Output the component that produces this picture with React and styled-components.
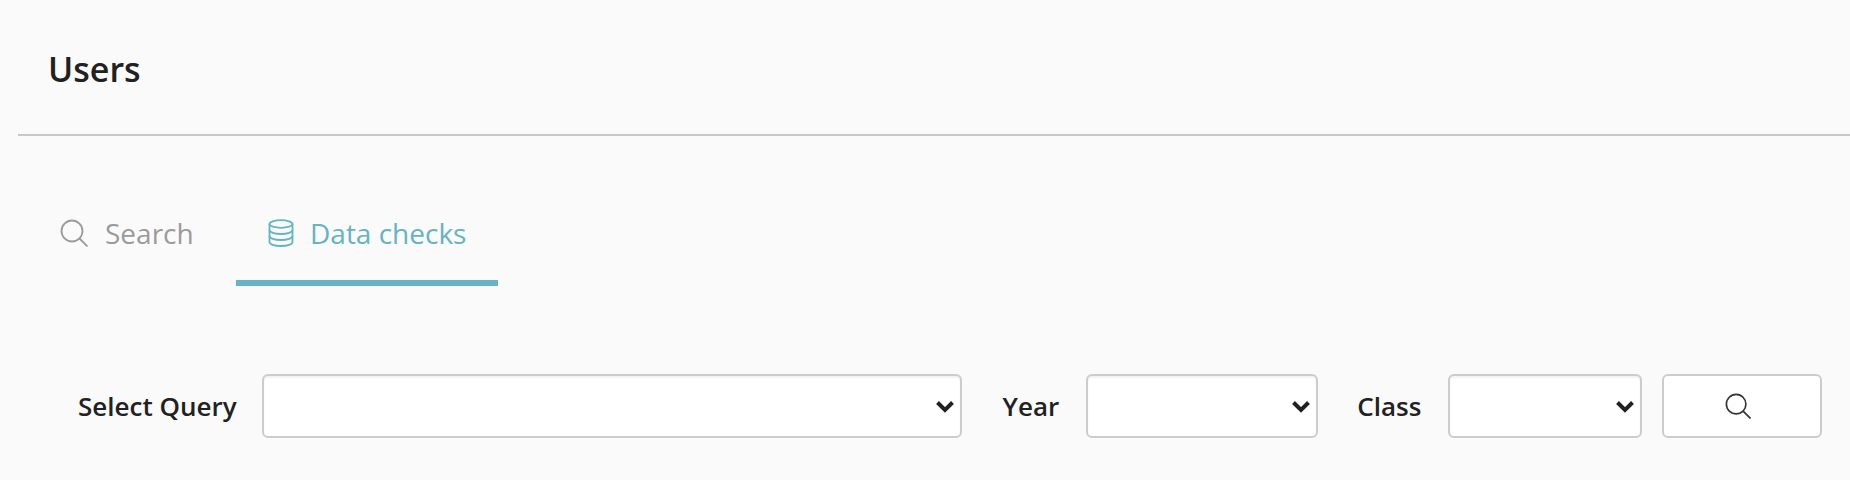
import React from 'react';
import styled, { createGlobalStyle } from 'styled-components';

const Global = createGlobalStyle`
  html, body {
    margin: 0;
    padding: 0;
    background: #fafafa;
    font-family: "Open Sans", "Liberation Sans", sans-serif;
  }
`;

const Page = styled.div`
  width: 1850px;
  height: 480px;
  overflow: hidden;
  padding-left: 18px;
  box-sizing: border-box;
  background: #fafafa;
`;

const Header = styled.header`
  height: 131px;
  border-bottom: 2px solid #c8c8c8;
  padding-left: 30px;
  padding-top: 3px;
  display: flex;
  align-items: center;

  & h1 {
    margin: 0;
    font-size: 34px;
    font-weight: 600;
    line-height: 40px;
    color: #212121;
  }
`;

const Tabs = styled.nav`
  display: flex;
  margin-top: 40px;
  padding-left: 26px;
`;

const Tab = styled.div`
  box-sizing: border-box;
  height: 110px;
  width: ${p => p.$width}px;
  padding: 10px 0 0 ${p => p.$pad}px;
  display: flex;
  align-items: center;
  gap: ${p => p.$gap}px;
  font-size: 28px;
  color: ${p => (p.$active ? '#66b3c1' : '#9b9b9b')};
  border-bottom: 6px solid ${p => (p.$active ? '#66b3c1' : 'transparent')};
`;

const Filters = styled.form`
  display: flex;
  align-items: center;
  margin-top: 88px;
  padding-left: 60px;
`;

const Label = styled.label`
  font-size: 26px;
  font-weight: 600;
  color: #212121;
  margin-right: ${p => p.$gap}px;
  white-space: nowrap;
`;

const SelectWrap = styled.div`
  position: relative;
  width: ${p => p.$width}px;
  height: 64px;
  margin-right: ${p => p.$gap}px;
  flex: none;

  & svg {
    position: absolute;
    right: 8px;
    top: 26px;
    pointer-events: none;
  }
`;

const Select = styled.select`
  appearance: none;
  width: 100%;
  height: 100%;
  box-sizing: border-box;
  border: 2px solid #cccccc;
  border-radius: 6px;
  background: #fff;
  box-shadow: inset 0 2px 2px rgba(0, 0, 0, 0.05);
`;

const SearchButton = styled.button`
  width: 160px;
  height: 64px;
  box-sizing: border-box;
  border: 2px solid #cccccc;
  border-radius: 6px;
  background: #fff;
  padding: 0 8px 0 0;
  display: flex;
  align-items: center;
  justify-content: center;
`;

const SearchIcon = ({ size, color }) => (
  <svg width={size} height={size} viewBox="0 0 28 28" fill="none" stroke={color} strokeWidth="1.8">
    <circle cx="12" cy="12" r="10.5" />
    <path d="M19.5 19.5 L27.5 27.5" />
  </svg>
);

const DatabaseIcon = ({ color }) => (
  <svg width="26" height="28" viewBox="0 0 26 28" fill="none" stroke={color} strokeWidth="1.8">
    <ellipse cx="13" cy="5" rx="11.5" ry="3.8" />
    <path d="M1.5 5 V23 C1.5 25.2 6.5 27 13 27 C19.5 27 24.5 25.2 24.5 23 V5" />
    <path d="M1.5 11 C1.5 13.2 6.5 15 13 15 C19.5 15 24.5 13.2 24.5 11" />
    <path d="M1.5 17 C1.5 19.2 6.5 21 13 21 C19.5 21 24.5 19.2 24.5 17" />
  </svg>
);

const Chevron = () => (
  <svg width="18" height="13" viewBox="0 0 18 13" fill="none" stroke="#212121" strokeWidth="4">
    <path d="M1.5 2.5 L9 10 L16.5 2.5" />
  </svg>
);

const FilterSelect = ({ width, gap }) => (
  <SelectWrap $width={width} $gap={gap}>
    <Select />
    <Chevron />
  </SelectWrap>
);

const App = () => (
  <Page>
    <Global />
    <Header>
      <h1>Users</h1>
    </Header>
    <Tabs>
      <Tab $width={192} $pad={16} $gap={17}>
        <SearchIcon size={28} color="#9b9b9b" />
        Search
      </Tab>
      <Tab $width={262} $pad={32} $gap={16} $active>
        <DatabaseIcon color="#66b3c1" />
        Data checks
      </Tab>
    </Tabs>
    <Filters>
      <Label $gap={25}>Select Query</Label>
      <FilterSelect width={700} gap={41} />
      <Label $gap={27}>Year</Label>
      <FilterSelect width={232} gap={39} />
      <Label $gap={27}>Class</Label>
      <FilterSelect width={194} gap={20} />
      <SearchButton type="button">
        <SearchIcon size={26} color="#333333" />
      </SearchButton>
    </Filters>
  </Page>
);

export default App;
